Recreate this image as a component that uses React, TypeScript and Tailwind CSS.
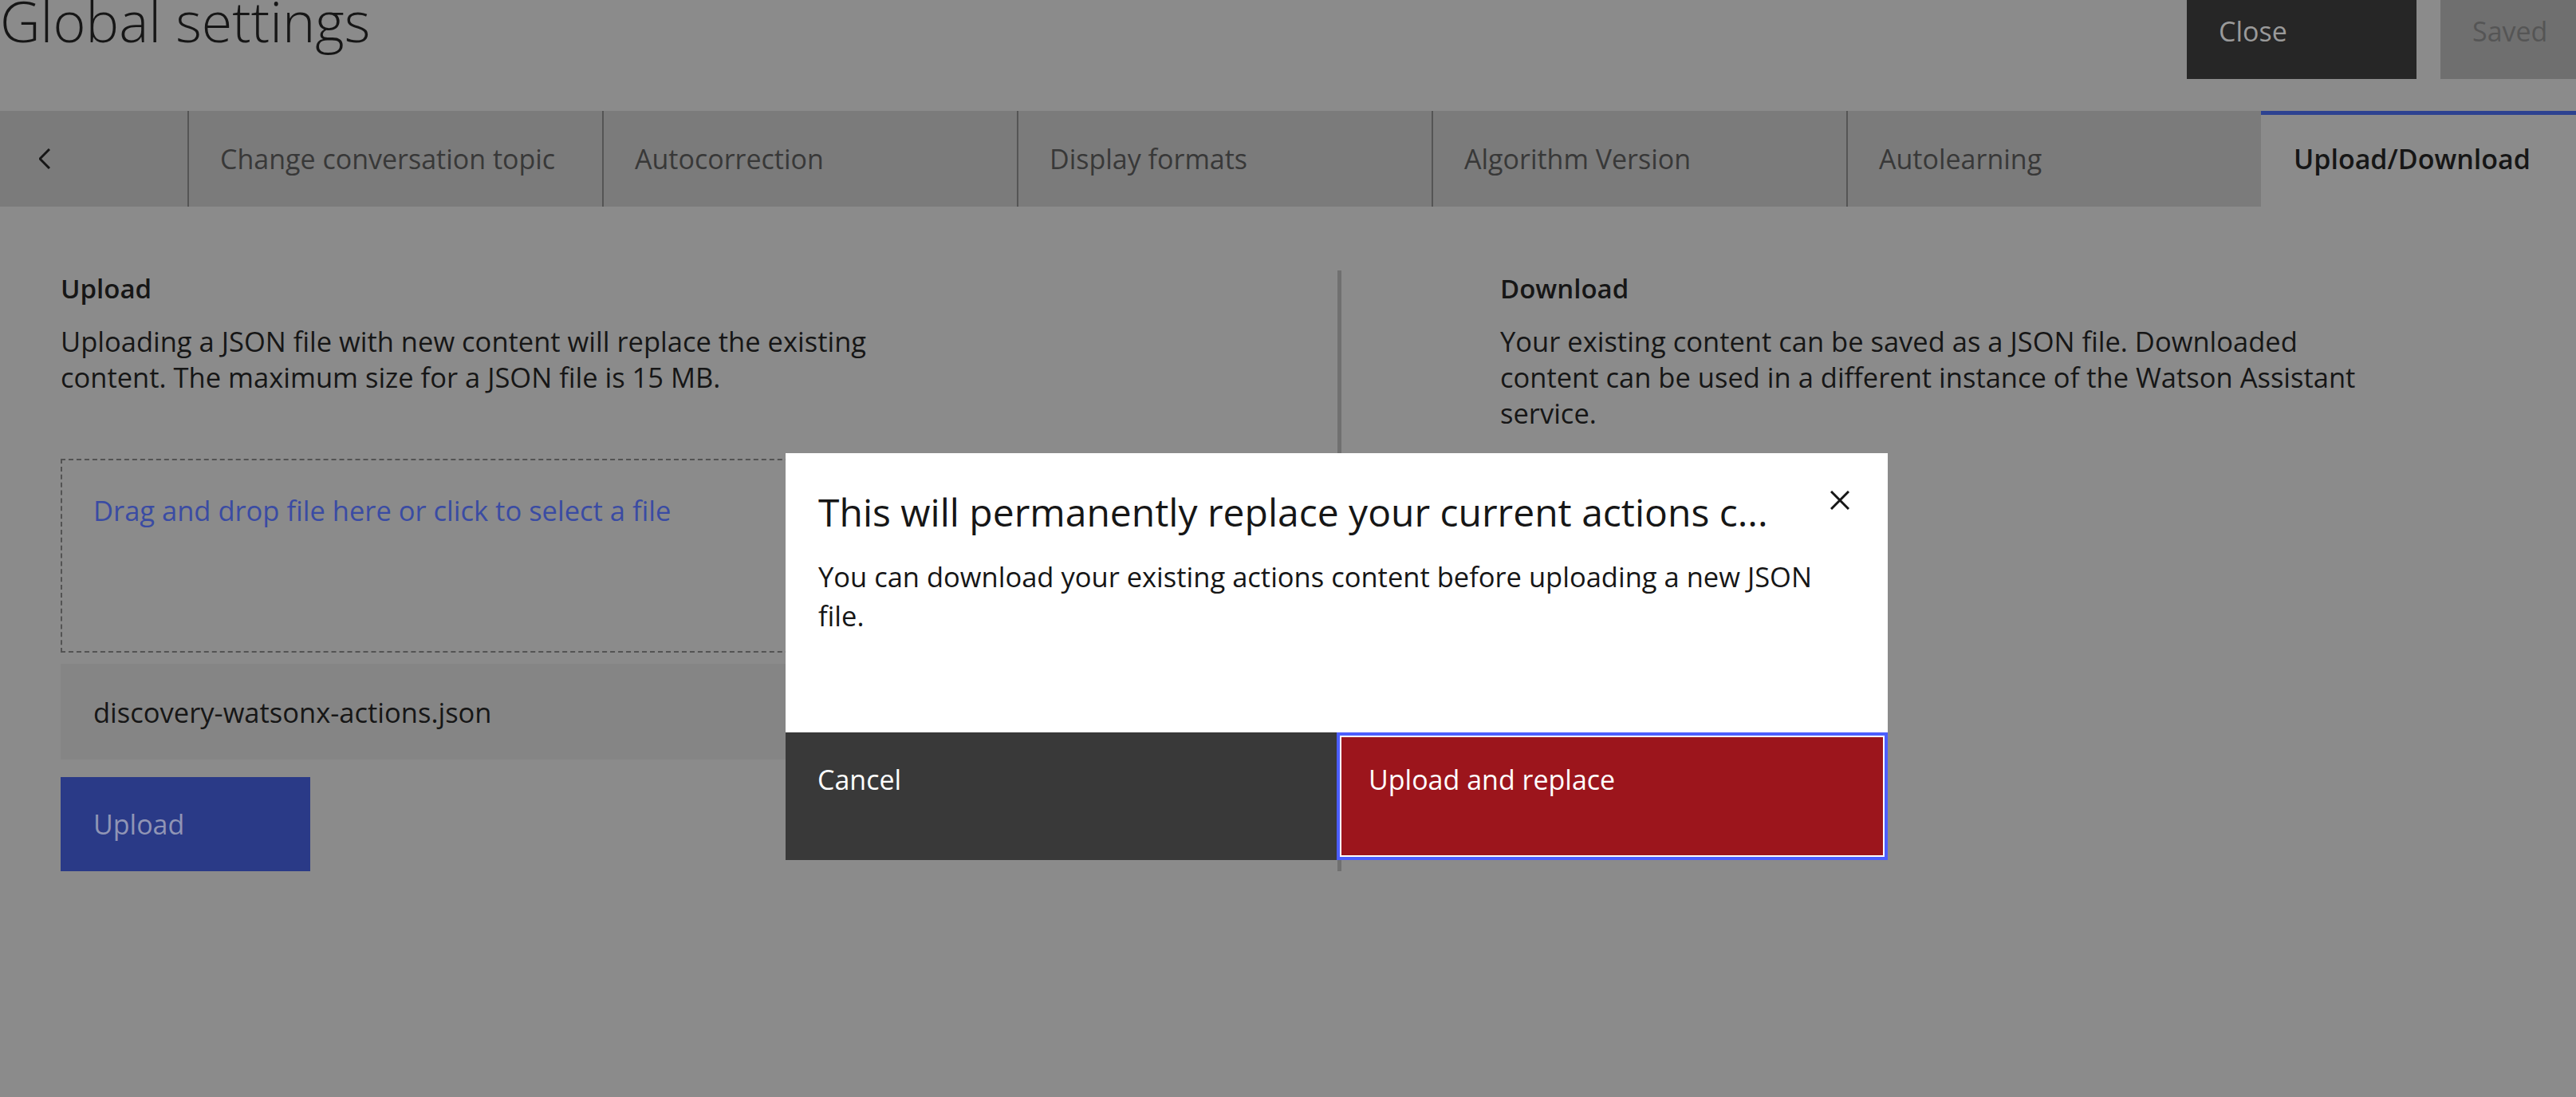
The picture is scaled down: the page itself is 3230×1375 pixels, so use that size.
const tabs = ["Change conversation topic", "Autocorrection", "Display formats", "Algorithm Version", "Autolearning"];

const App = () => {
  return (
    <div className="relative w-[3230px] h-[1375px] overflow-hidden bg-[#8b8b8b] font-['Open_Sans',sans-serif] text-[34.5px] leading-[45px] text-[#161616]">
      {/* header */}
      <div className="flex justify-between items-start h-[139px]">
        <h1 className="text-[70px] leading-[52px] font-light text-[#161616]">Global settings</h1>
        <div className="flex gap-[30px] text-[34px]">
          <button className="w-[288px] h-[99px] bg-[#262626] flex items-start pl-[40px] pt-[17px] text-[#9a9a9a]">Close</button>
          <button className="w-[170px] h-[99px] bg-[#6f6f6f] flex items-start pl-[40px] pt-[17px] text-[#555555]">Saved</button>
        </div>
      </div>

      {/* tabs */}
      <div className="flex h-[120px] bg-[#7b7b7b] text-[34px]">
        <div className="w-[235px] flex items-center pl-[49px]">
          <svg width="14" height="26" viewBox="0 0 14 26" fill="none">
            <polyline points="13,1 1,13 13,25" stroke="#161616" strokeWidth="3" />
          </svg>
        </div>
        {tabs.map((t) => (
          <div key={t} className="w-[520px] border-l-2 border-[#555555] flex items-center pl-[39px] text-[#383838]">
            {t}
          </div>
        ))}
        <div className="flex-1 bg-[#8b8b8b] border-t-[5px] border-[#2d4291] flex items-center pl-[41px] pb-[4px] font-semibold text-[#161616]">
          Upload/Download
        </div>
      </div>

      {/* content */}
      <div className="flex pt-[80px]">
        <div className="w-[1677px] pl-[76px] pr-[77px]">
          <h2 className="font-semibold text-[33px]">Upload</h2>
          <p className="mt-[21px] max-w-[1110px]">
            Uploading a JSON file with new content will replace the existing content. The maximum size for a JSON file is 15 MB.
          </p>
          <div className="mt-[80px] h-[243px] border-2 border-dashed border-[#535353] pt-[40px] pl-[39px] text-[#3a4ba3]">
            Drag and drop file here or click to select a file
          </div>
          <div className="mt-[14px] h-[120px] bg-[#858585] flex items-center pl-[41px]">discovery-watsonx-actions.json</div>
          <button className="mt-[22px] w-[313px] h-[118px] bg-[#2a3a87] text-left pl-[41px] text-[34px] text-[#9095b5]">Upload</button>
        </div>
        <div className="border-l-[5px] border-[#707070] pl-[199px]">
          <h2 className="font-semibold text-[33px]">Download</h2>
          <p className="mt-[21px] max-w-[1110px]">
            Your existing content can be saved as a JSON file. Downloaded content can be used in a different instance of the Watson Assistant service.
          </p>
        </div>
      </div>

      {/* modal */}
      <div className="absolute left-[985px] top-[568px] w-[1382px] bg-white flex flex-col">
        <div className="relative h-[350px] pl-[41px] pt-[44px]">
          <h3 className="text-[48px] leading-[59px] whitespace-nowrap">This will permanently replace your current actions c...</h3>
          <button className="absolute top-[47px] right-[48px] w-[24px] h-[24px]">
            <svg width="24" height="24" viewBox="0 0 24 24" fill="none">
              <path d="M1 1L23 23M23 1L1 23" stroke="#161616" strokeWidth="3" />
            </svg>
          </button>
          <p className="mt-[27px] w-[1280px] leading-[49px]">
            You can download your existing actions content before uploading a new JSON file.
          </p>
        </div>
        <div className="flex h-[160px] text-[34px]">
          <button className="w-[691px] bg-[#393939] text-white pl-[40px] pt-[37px] flex items-start">Cancel</button>
          <button className="flex-1 border-[4px] border-[#4c5efe] shadow-[inset_0_0_0_2px_#ffffff] bg-[#9c151c] text-white pl-[36px] pt-[33px] flex items-start">
            Upload and replace
          </button>
        </div>
      </div>
    </div>
  );
};

export default App;
